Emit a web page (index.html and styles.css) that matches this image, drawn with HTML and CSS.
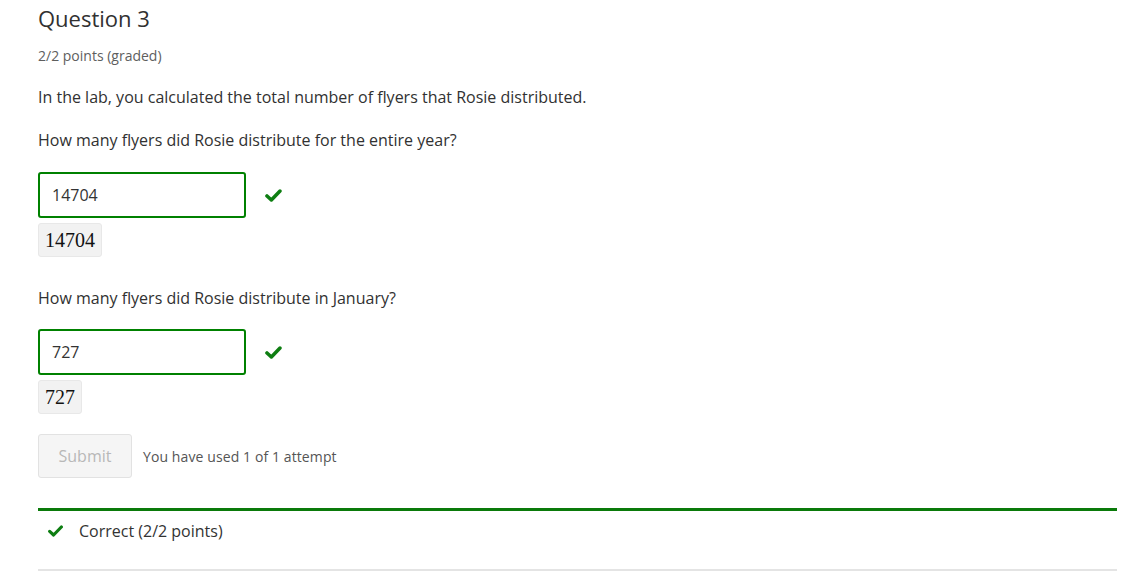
FILE: index.html
```html
<!DOCTYPE html>
<html>
<head>
<meta charset="utf-8">
<link rel="stylesheet" href="styles.css">
</head>
<body>
<div class="problem">
  <h3 class="title">Question 3</h3>
  <div class="meta">2/2 points (graded)</div>
  <p class="text intro">In the lab, you calculated the total number of flyers that Rosie distributed.</p>
  <p class="text q">How many flyers did Rosie distribute for the entire year?</p>
  <div class="answer-row">
    <div class="input">14704</div>
    <svg class="check" viewBox="0 0 18 14" width="17" height="13"><path d="M2 7.5 L6.7 11.8 L16 2.2" fill="none" stroke="#0e7e12" stroke-width="3.8" stroke-linecap="round" stroke-linejoin="round"/></svg>
  </div>
  <div class="preview">14704</div>
  <p class="text q2">How many flyers did Rosie distribute in January?</p>
  <div class="answer-row second">
    <div class="input">727</div>
    <svg class="check" viewBox="0 0 18 14" width="17" height="13"><path d="M2 7.5 L6.7 11.8 L16 2.2" fill="none" stroke="#0e7e12" stroke-width="3.8" stroke-linecap="round" stroke-linejoin="round"/></svg>
  </div>
  <div class="preview second">727</div>
  <div class="actions">
    <button class="submit">Submit</button>
    <span class="attempts">You have used 1 of 1 attempt</span>
  </div>
  <div class="notification">
    <svg class="check small" viewBox="0 0 18 14" width="15" height="12"><path d="M2 7.5 L6.7 11.8 L16 2.2" fill="none" stroke="#0e7e12" stroke-width="3.8" stroke-linecap="round" stroke-linejoin="round"/></svg>
    <span>Correct (2/2 points)</span>
  </div>
</div>
</body>
</html>
```
FILE: styles.css
```css
html, body {
  margin: 0;
  padding: 0;
  background: #fff;
}
body {
  font-family: "Open Sans", sans-serif;
  color: #313131;
}
.problem {
  padding: 3px 29px 0 38px;
}
.title {
  margin: 0;
  font-size: 22px;
  font-weight: 400;
  line-height: 30px;
  color: #313131;
}
.meta {
  margin-top: 13px;
  font-size: 14px;
  line-height: 20px;
  color: #5e5e5e;
}
.text {
  margin: 0;
  font-size: 16px;
  line-height: 24px;
}
.text.intro {
  margin-top: 19px;
}
.text.q {
  margin-top: 19px;
}
.text.q2 {
  margin-top: 29px;
}
.answer-row {
  display: flex;
  align-items: center;
  margin-top: 20px;
}
.answer-row.second {
  margin-top: 19px;
}
.input {
  box-sizing: border-box;
  width: 208px;
  height: 46px;
  border: 2px solid #008100;
  border-radius: 3px;
  padding: 0 12px;
  display: flex;
  align-items: center;
  font-size: 16px;
  color: #333;
}
.check {
  margin-left: 19px;
}
.preview {
  box-sizing: border-box;
  width: max-content;
  margin-top: 5px;
  background: #f2f2f2;
  border: 1px solid #e8e8e8;
  border-radius: 3px;
  padding: 0 6px;
  height: 34px;
  line-height: 32px;
  font-family: "Liberation Serif", "DejaVu Serif", serif;
  font-size: 20px;
  color: #111;
}
.preview.second {
  margin-top: 5px;
}
.actions {
  display: flex;
  align-items: center;
  margin-top: 20px;
}
.submit {
  box-sizing: border-box;
  width: 94px;
  height: 44px;
  background: #f5f5f5;
  border: 1px solid #e2e2e2;
  border-radius: 3px;
  font-family: "Open Sans", sans-serif;
  font-size: 16px;
  color: #b8b8b8;
  padding: 0;
}
.attempts {
  margin-left: 11px;
  font-size: 14px;
  letter-spacing: 0.1px;
  color: #555;
}
.notification {
  box-sizing: border-box;
  margin-top: 30px;
  border-top: 3px solid #0a7a0a;
  border-bottom: 2px solid #e4e4e4;
  height: 63px;
  padding: 8px 0 0 10px;
  display: flex;
  align-items: flex-start;
  font-size: 16px;
  line-height: 24px;
  color: #333;
}
.notification .check {
  margin: 6px 16px 0 0;
}
```
